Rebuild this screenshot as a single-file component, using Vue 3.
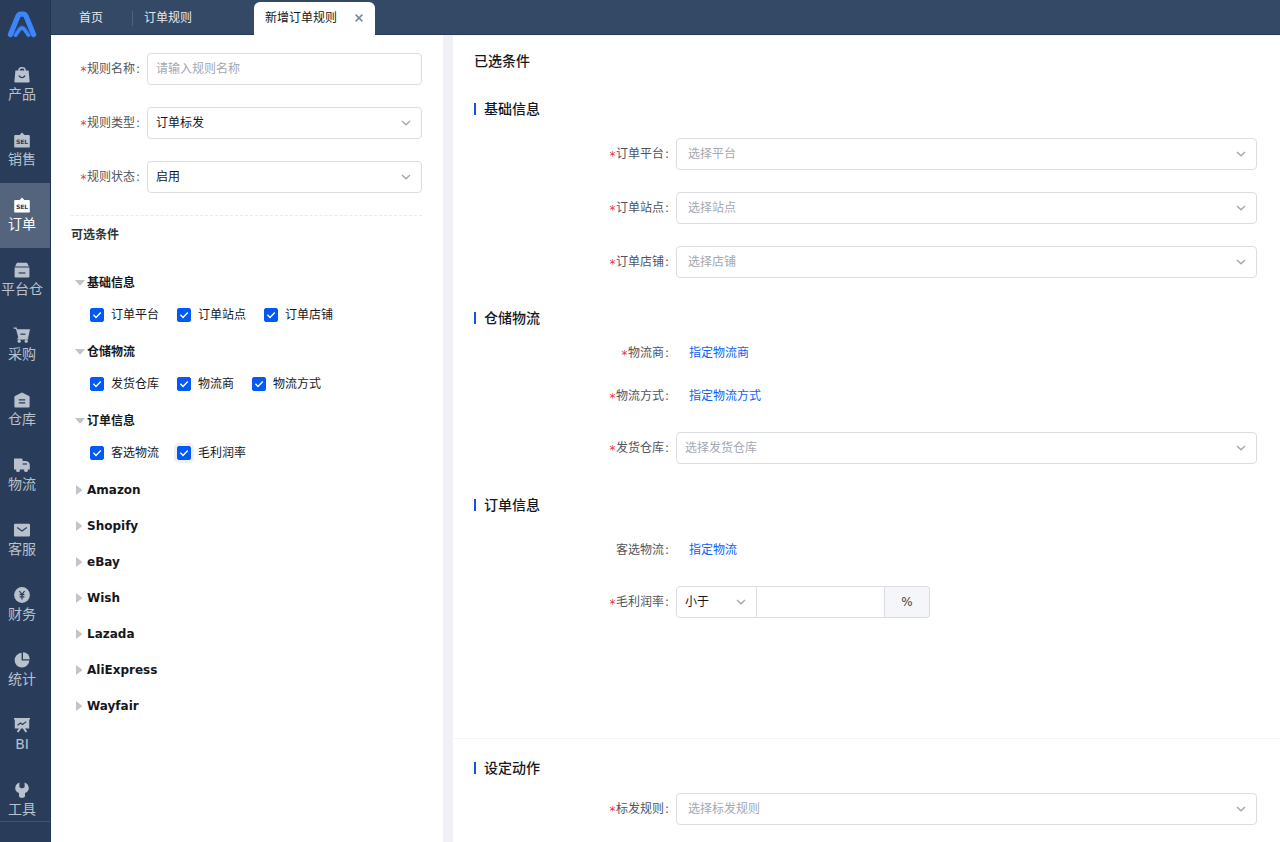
<script setup>
import { ref } from 'vue'

const menu = [
  { label: '产品', icon: 'bag' },
  { label: '销售', icon: 'sel' },
  { label: '订单', icon: 'sel', active: true },
  { label: '平台仓', icon: 'box' },
  { label: '采购', icon: 'cart' },
  { label: '仓库', icon: 'house' },
  { label: '物流', icon: 'truck' },
  { label: '客服', icon: 'mail' },
  { label: '财务', icon: 'coin' },
  { label: '统计', icon: 'pie' },
  { label: 'BI', icon: 'board' },
  { label: '工具', icon: 'wrench' },
]

const groups = ref([
  { name: '基础信息', open: true, items: [
    { label: '订单平台', checked: true },
    { label: '订单站点', checked: true },
    { label: '订单店铺', checked: true },
  ] },
  { name: '仓储物流', open: true, items: [
    { label: '发货仓库', checked: true },
    { label: '物流商', checked: true },
    { label: '物流方式', checked: true },
  ] },
  { name: '订单信息', open: true, items: [
    { label: '客选物流', checked: true },
    { label: '毛利润率', checked: true, halo: true },
  ] },
  { name: 'Amazon', open: false, items: [] },
  { name: 'Shopify', open: false, items: [] },
  { name: 'eBay', open: false, items: [] },
  { name: 'Wish', open: false, items: [] },
  { name: 'Lazada', open: false, items: [] },
  { name: 'AliExpress', open: false, items: [] },
  { name: 'Wayfair', open: false, items: [] },
])

const basics = [
  { id: 'platform', label: '订单平台', placeholder: '选择平台' },
  { id: 'site', label: '订单站点', placeholder: '选择站点' },
  { id: 'shop', label: '订单店铺', placeholder: '选择店铺' },
]
</script>

<template>
  <div class="app">
    <aside class="sidebar">
      <a href="#" class="logo" aria-label="主页">
        <svg width="30" height="28" viewBox="0 0 30 28">
          <path d="M3.4 23.6 L10.8 5.6 Q11.8 3.2 13.8 3.2 H16.2 Q18.2 3.2 19.2 5.6 L26.6 23.6" fill="none" stroke="#3d85fb" stroke-width="5.2" stroke-linejoin="round" stroke-linecap="round" />
          <path d="M8.4 24 L12.6 18.2 Q15 15.6 17.4 18.2 L21.6 24" fill="none" stroke="#3d85fb" stroke-width="4" stroke-linejoin="round" stroke-linecap="round" />
          <path d="M5.8 25.6 L11.6 16.6 Q15 13 18.4 16.6 L24.2 25.6" fill="none" stroke="#2c5db4" stroke-width="0.8" />
        </svg>
      </a>
      <nav class="menu">
        <a v-for="m in menu" :key="m.label" href="#" class="menu-item" :class="{ active: m.active }">
          <svg class="menu-icon" width="18" height="18" viewBox="0 0 18 18" fill="currentColor">
            <template v-if="m.icon === 'bag'">
              <path d="M6 5 V4 Q6 1.8 9 1.8 Q12 1.8 12 4 V5" fill="none" stroke="currentColor" stroke-width="1.5" />
              <path d="M2.4 4.6 H15.6 L16.6 15.2 Q16.6 16.6 15.4 16.6 H2.6 Q1.4 16.6 1.4 15.2 Z" />
              <path class="cut" d="M5.8 9.6 Q9 13.6 12.2 9.6" />
            </template>
            <template v-else-if="m.icon === 'sel'">
              <path d="M6.6 4 L9 1.4 L11.4 4 H15.8 Q16.8 4 16.8 5 V15.4 Q16.8 16.6 15.8 16.6 H2.2 Q1.2 16.6 1.2 15.4 V5 Q1.2 4 2.2 4 Z" />
              <text class="sel-text" x="9" y="12.6" text-anchor="middle">SEL</text>
            </template>
            <template v-else-if="m.icon === 'box'">
              <path d="M4 1.8 H14 L16 5.4 H2 Z" />
              <path d="M1.6 6.6 H16.4 V15.2 Q16.4 16.4 15.2 16.4 H2.8 Q1.6 16.4 1.6 15.2 Z" />
              <path class="cut" d="M5.6 12 H12.4" />
            </template>
            <template v-else-if="m.icon === 'cart'">
              <path d="M0.6 1.4 H3.6 L4.2 3.2 H17 L15.4 11 Q15.2 12 14.2 12 H5.4 L3 3 L0.6 2.6 Z" />
              <path d="M4.4 12 H15.2 V13.6 H4.4 Z" />
              <circle cx="6.2" cy="15.2" r="1.6" /><circle cx="13.2" cy="15.2" r="1.6" />
              <path class="cut" d="M7.4 8.2 H12.4" />
            </template>
            <template v-else-if="m.icon === 'house'">
              <path d="M9 1.4 L16 5 Q16.6 5.4 16.6 6.2 V15.2 Q16.6 16.4 15.4 16.4 H2.6 Q1.4 16.4 1.4 15.2 V6.2 Q1.4 5.4 2 5 Z" />
              <path class="cut" d="M5.8 8.8 H12.2 M5.8 11.8 H12.2" />
            </template>
            <template v-else-if="m.icon === 'truck'">
              <path d="M1.6 2.4 H8.4 Q9.6 2.4 9.6 3.6 V5 H13 Q16.6 5.6 16.8 9 V13.6 H1 V3.2 Q1 2.4 1.6 2.4 Z" />
              <circle cx="5" cy="14.2" r="1.9" /><circle cx="13" cy="14.2" r="1.9" />
              <path class="cut" d="M9.6 8 H14" />
            </template>
            <template v-else-if="m.icon === 'mail'">
              <rect x="1" y="2.8" width="16" height="12.8" rx="1" />
              <path class="cut" d="M4.2 6.6 L9 10 L13.8 6.6" />
            </template>
            <template v-else-if="m.icon === 'coin'">
              <circle cx="9" cy="9" r="7.9" />
              <path class="cut" d="M6.4 5 L9 8.4 L11.6 5 M6.6 8.6 H11.4 M6.6 10.8 H11.4 M9 8.4 V13.4" />
            </template>
            <template v-else-if="m.icon === 'pie'">
              <path d="M8.6 1.8 V9.6 H16.4 A7.4 7.4 0 1 1 8.6 1.8 Z" />
              <path d="M10 1.2 A7 7 0 0 1 16.8 8.2 H10 Z" />
            </template>
            <template v-else-if="m.icon === 'board'">
              <path d="M1 2 H17 V3.6 H16.2 V12.6 H1.8 V3.6 H1 Z" />
              <path d="M7.4 12 L4.6 16 M10.6 12 L13.4 16" stroke="currentColor" stroke-width="2" />
              <path class="cut" d="M4.6 9.2 L7.4 7 L9.6 8.4 L13.2 5.6" />
            </template>
            <template v-else>
              <path d="M6.4 1.4 V6.2 L9 7.6 L11.6 6.2 V1.4 Q15.8 3.2 15.8 7.2 Q15.8 10.4 12 12 V14.8 Q12 16.8 9 16.8 Q6 16.8 6 14.8 V12 Q2.2 10.4 2.2 7.2 Q2.2 3.2 6.4 1.4 Z" />
            </template>
          </svg>
          <span>{{ m.label }}</span>
        </a>
      </nav>
      <div class="sidebar-foot"></div>
    </aside>

    <div class="main">
      <header class="tabs">
        <a href="#" class="tab home">首页</a>
        <a href="#" class="tab rules">订单规则</a>
        <div class="tab current">
          <span>新增订单规则</span>
          <button type="button" class="close" aria-label="关闭">
            <svg width="8" height="8" viewBox="0 0 8 8"><path d="M0.6 0.6 L7.4 7.4 M7.4 0.6 L0.6 7.4" fill="none" stroke="#7d8895" stroke-width="1.5" /></svg>
          </button>
        </div>
      </header>

      <div class="content">
        <section class="left">
          <div class="row">
            <label for="name"><i>*</i>规则名称<b>:</b></label>
            <input id="name" class="control" type="text" placeholder="请输入规则名称">
          </div>
          <div class="row">
            <label for="type"><i>*</i>规则类型<b>:</b></label>
            <div class="pick">
              <select id="type" class="control"><option>订单标发</option></select>
              <svg class="arrow" width="10" height="6" viewBox="0 0 10 6"><path d="M1 1 L5 4.8 L9 1" /></svg>
            </div>
          </div>
          <div class="row">
            <label for="status"><i>*</i>规则状态<b>:</b></label>
            <div class="pick">
              <select id="status" class="control"><option>启用</option></select>
              <svg class="arrow" width="10" height="6" viewBox="0 0 10 6"><path d="M1 1 L5 4.8 L9 1" /></svg>
            </div>
          </div>

          <h2 class="available">可选条件</h2>

          <div v-for="g in groups" :key="g.name" class="group">
            <button type="button" class="group-head" :aria-expanded="g.open" @click="g.open = !g.open">
              <svg class="caret" width="10" height="10" viewBox="0 0 10 10">
                <path v-if="g.open" d="M0 2 H10 L5.8 7 Q5 7.8 4.2 7 Z" />
                <path v-else d="M1 0 V10 L6.6 5.8 Q7.4 5 6.6 4.2 Z" />
              </svg>
              {{ g.name }}
            </button>
            <div v-if="g.open && g.items.length" class="checks">
              <label v-for="c in g.items" :key="c.label" class="check">
                <input v-model="c.checked" type="checkbox" :class="{ halo: c.halo }">
                <svg class="tick" width="14" height="14" viewBox="0 0 14 14"><path d="M3.4 6.8 L6 9.4 L10.8 4.4" /></svg>
                <span>{{ c.label }}</span>
              </label>
            </div>
          </div>
        </section>

        <div class="right">
          <section class="selected">
            <h2 class="title">已选条件</h2>

            <h3>基础信息</h3>
            <div class="fields basics">
              <div v-for="f in basics" :key="f.id" class="row">
                <label :for="f.id"><i>*</i>{{ f.label }}<b>:</b></label>
                <div class="pick wide">
                  <select :id="f.id" class="control empty"><option>{{ f.placeholder }}</option></select>
                  <svg class="arrow" width="10" height="6" viewBox="0 0 10 6"><path d="M1 1 L5 4.8 L9 1" /></svg>
                </div>
              </div>
            </div>

            <h3>仓储物流</h3>
            <div class="fields storage">
              <div class="row text-row">
                <span class="label"><i>*</i>物流商<b>:</b></span>
                <a href="#" class="link">指定物流商</a>
              </div>
              <div class="row text-row">
                <span class="label"><i>*</i>物流方式<b>:</b></span>
                <a href="#" class="link">指定物流方式</a>
              </div>
              <div class="row">
                <label for="warehouse"><i>*</i>发货仓库<b>:</b></label>
                <div class="pick">
                  <select id="warehouse" class="control empty"><option>选择发货仓库</option></select>
                  <svg class="arrow" width="10" height="6" viewBox="0 0 10 6"><path d="M1 1 L5 4.8 L9 1" /></svg>
                </div>
              </div>
            </div>

            <h3>订单信息</h3>
            <div class="fields order">
              <div class="row text-row">
                <span class="label">客选物流<b>:</b></span>
                <a href="#" class="link">指定物流</a>
              </div>
              <div class="row">
                <label for="margin"><i>*</i>毛利润率<b>:</b></label>
                <div class="compound">
                  <div class="pick">
                    <select class="control" aria-label="比较方式"><option>小于</option></select>
                    <svg class="arrow" width="10" height="6" viewBox="0 0 10 6"><path d="M1 1 L5 4.8 L9 1" /></svg>
                  </div>
                  <input id="margin" class="control" type="text">
                  <span class="unit">%</span>
                </div>
              </div>
            </div>
          </section>

          <section class="action">
            <h3>设定动作</h3>
            <div class="fields">
              <div class="row">
                <label for="mark"><i>*</i>标发规则<b>:</b></label>
                <div class="pick wide">
                  <select id="mark" class="control empty"><option>选择标发规则</option></select>
                  <svg class="arrow" width="10" height="6" viewBox="0 0 10 6"><path d="M1 1 L5 4.8 L9 1" /></svg>
                </div>
              </div>
            </div>
          </section>
        </div>
      </div>
    </div>
  </div>
</template>

<style>
body {
  margin: 0;
  background: #fff;
}
</style>

<style scoped>
.app {
  display: flex;
  min-height: 100vh;
  font: 12px/20px "DejaVu Sans", "Noto Sans CJK SC", sans-serif;
  color: #15171c;
}
.app *, .app *::before {
  box-sizing: border-box;
}
a {
  text-decoration: none;
}
h2, h3 {
  margin: 0;
}
button, input, select {
  font: inherit;
  color: inherit;
  margin: 0;
}
button {
  border: 0;
  padding: 0;
  background: none;
  cursor: pointer;
}

/* sidebar */
.sidebar {
  flex: none;
  width: 51px;
  height: 100vh;
  display: flex;
  flex-direction: column;
  background: #293d5b;
  border-right: 1px solid #223552;
}
.logo {
  flex: none;
  display: flex;
  justify-content: center;
  height: 53px;
  padding: 11px 6px 0 0;
}
.menu {
  flex: 1;
  min-height: 0;
  overflow: hidden;
}
.menu-item {
  display: flex;
  flex-direction: column;
  align-items: center;
  height: 65px;
  padding: 13px 6px 0 0;
  font-size: 14px;
  color: #b9c1cd;
  white-space: nowrap;
}
.menu-item.active {
  color: #fff;
  background: #54647d;
}
.menu-icon {
  flex: none;
}
.cut {
  fill: none;
  stroke: #293d5b;
  stroke-width: 1.2;
}
.sel-text {
  font: bold 6px "DejaVu Sans", sans-serif;
  fill: #293d5b;
}
.sidebar-foot {
  flex: none;
  height: 21px;
  border-top: 1px solid #42546f;
}

/* tab bar */
.main {
  flex: 1;
  min-width: 0;
  display: flex;
  flex-direction: column;
}
.tabs {
  flex: none;
  display: flex;
  align-items: flex-end;
  height: 35px;
  padding-left: 28px;
  background: #344965;
  box-shadow: inset 0 -1px #263a5a;
}
.tab {
  display: flex;
  align-items: center;
  height: 33px;
  padding-bottom: 2px;
  color: #e4e8ee;
}
.home {
  width: 54px;
  background: linear-gradient(#52647d, #52647d) right 9px / 1px 15px no-repeat;
}
.rules {
  width: 121px;
  padding-left: 11px;
}
.current {
  justify-content: space-between;
  width: 121px;
  padding: 0 12px 2px 11px;
  color: #15171c;
  background: #fff;
  border-radius: 6px 6px 0 0;
}
.close {
  display: flex;
}

/* panels */
.content {
  flex: 1;
  display: flex;
}
.left {
  flex: none;
  width: 392px;
  padding: 18px 21px 0 20px;
}
.right {
  flex: 1;
  min-width: 0;
  display: flex;
  flex-direction: column;
  border-left: 10px solid #f0f1f6;
}
.selected {
  flex: 1;
  padding: 15px 23px 0 21px;
  border-top: 1px solid #f6f6f8;
}
.action {
  padding: 19px 23px 17px 21px;
  border-top: 1px solid #f6f6f8;
}

/* form rows */
.row {
  display: grid;
  grid-template-columns: 202px 1fr;
  align-items: center;
}
.row > label, .label {
  padding-right: 6px;
  text-align: right;
  color: #50545c;
}
.left .row {
  grid-template-columns: 76px 1fr;
  margin-bottom: 22px;
}
i, b {
  display: inline-block;
  width: 6px;
  font-style: normal;
  font-weight: 400;
  line-height: 12px;
  text-align: center;
}
i {
  width: 7px;
  vertical-align: -2px;
  color: #e5353e;
}
.control {
  width: 100%;
  min-width: 0;
  height: 32px;
  padding: 0 8px;
  border: 1px solid #dcdde0;
  border-radius: 4px;
  background: #fff;
  appearance: none;
  outline: none;
}
.control::placeholder {
  color: #a3a8b1;
  opacity: 1;
}
.empty {
  color: #a3a8b1;
}
.wide .control {
  padding-left: 11px;
}
.pick {
  display: grid;
  grid-template-columns: 1fr 21px;
  align-items: center;
}
.pick .control {
  grid-area: 1 / 1 / 2 / 3;
}
.arrow {
  grid-area: 1 / 2 / 2 / 3;
  pointer-events: none;
}
.arrow path {
  fill: none;
  stroke: #a2a8b2;
  stroke-width: 1.4;
}

/* available conditions */
.available {
  padding-top: 9px;
  margin-bottom: 20px;
  border-top: 1px dashed #e9eaec;
  font-size: 12px;
  line-height: 20px;
  font-weight: 600;
  color: #303339;
}
.group-head {
  display: flex;
  align-items: center;
  gap: 2px;
  height: 36px;
  padding-left: 4px;
  font-weight: 700;
}
.caret {
  fill: #bfc3ca;
}
.checks {
  display: flex;
  gap: 18px;
  height: 28px;
  margin-bottom: 5px;
  padding-left: 19px;
}
.check {
  display: grid;
  grid-template-columns: 14px auto;
  column-gap: 7px;
  align-items: center;
  cursor: pointer;
}
.check input {
  grid-area: 1 / 1;
  width: 14px;
  height: 14px;
  border: 1px solid #c9ccd2;
  border-radius: 2px;
  appearance: none;
  background: #fff;
}
.check input:checked {
  border-color: #0359f5;
  background: #0359f5;
}
.check .halo {
  box-shadow: 0 0 0 3px #f0f0f1;
}
.tick {
  grid-area: 1 / 1;
  z-index: 1;
  pointer-events: none;
}
.tick path {
  fill: none;
  stroke: #fff;
  stroke-width: 1.4;
}

/* selected conditions */
.title {
  font-size: 14px;
  line-height: 20px;
  font-weight: 500;
}
h3 {
  display: flex;
  align-items: center;
  gap: 8px;
  font-size: 14px;
  line-height: 20px;
  font-weight: 500;
}
h3::before {
  content: "";
  width: 2px;
  height: 12px;
  background: #1650e8;
}
.title + h3 {
  margin-top: 28px;
}
.basics {
  display: grid;
  gap: 22px;
  padding: 19px 0 30px;
}
.text-row {
  height: 43px;
}
.storage {
  padding: 3px 0 31px;
}
.text-row + .row:not(.text-row) {
  padding-top: 15px;
}
.order {
  padding-top: 13px;
}
.link {
  padding-left: 13px;
  color: #0a62f8;
}
.compound {
  display: grid;
  grid-template-columns: 81px 128px 45px;
}
.compound .pick .control {
  border-radius: 4px 0 0 4px;
}
.compound > .control {
  border-radius: 0;
  border-left: 0;
}
.unit {
  display: flex;
  align-items: center;
  justify-content: center;
  border: 1px solid #dcdde0;
  border-left: 0;
  border-radius: 0 4px 4px 0;
  background: #f4f6fa;
  color: #3e424a;
}
.action .fields {
  padding-top: 15px;
}
</style>
